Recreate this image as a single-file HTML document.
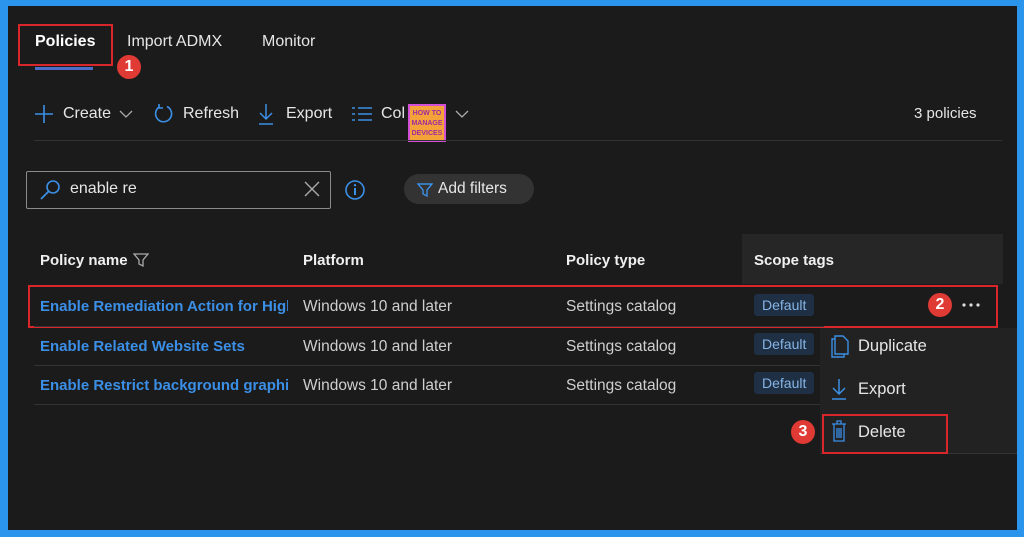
<!DOCTYPE html>
<html><head><meta charset="utf-8"><style>
*{margin:0;padding:0;box-sizing:border-box}
body{width:1024px;height:537px;background:#2b95ee;font-family:"Liberation Sans",sans-serif;overflow:hidden;position:relative}
#main{position:absolute;left:8px;top:6px;width:1009px;height:524px;background:#1b1b1b}
.a{position:absolute;white-space:nowrap}
.t{color:#e6e6e6;font-size:16px}
.h{color:#f0f0f0;font-size:15px;font-weight:bold}
.lnk{color:#3b8fe6;font-size:15px;font-weight:bold;overflow:hidden}
.g{color:#cfcfcf;font-size:15.5px}
.badge{position:absolute;background:#1f3044;color:#86b4e6;font-size:14px;padding:3px 8px;border-radius:3px}
.red{position:absolute;border:2.5px solid #d9262b}
.num{position:absolute;width:24px;height:24px;border-radius:50%;background:#e03a35;color:#fff;font-size:16px;font-weight:bold;text-align:center;line-height:24px}
.sep{position:absolute;height:1px;background:#333}
</style></head><body>
<div id="main">
<div class="a t" style="left:27px;top:27px;font-weight:bold;color:#fff">Policies</div>
<div style="position:absolute;left:27px;top:61px;width:58px;height:3px;background:#4b6cc7"></div>
<div class="a t" style="left:119px;top:27px">Import ADMX</div>
<div class="a t" style="left:254px;top:27px">Monitor</div>
<div class="red" style="left:10px;top:18px;width:95px;height:42px"></div>
<div class="num" style="left:109px;top:49px">1</div>

<svg class="a" style="left:26px;top:98px" width="20" height="20"><path d="M10 1v18M1 10h18" stroke="#3b8fe6" stroke-width="1.6"/></svg>
<div class="a t" style="left:55px;top:99px">Create</div>
<svg class="a" style="left:111px;top:103px" width="14" height="10"><path d="M1 2l6 6 6-6" stroke="#aaa" fill="none" stroke-width="1.3"/></svg>
<svg class="a" style="left:145px;top:97px" width="22" height="22"><path d="M14 3.5A8 8 0 1 1 7 3.6M6 1v4h4" stroke="#3b8fe6" fill="none" stroke-width="1.6"/></svg>
<div class="a t" style="left:175px;top:99px">Refresh</div>
<svg class="a" style="left:250px;top:97px" width="16" height="22"><path d="M8 1v15M2 10l6 6 6-6M1 21h14" stroke="#3b8fe6" fill="none" stroke-width="1.5"/></svg>
<div class="a t" style="left:278px;top:99px">Export</div>
<svg class="a" style="left:343px;top:100px" width="22" height="16"><path d="M1 2h3M1 8h3M1 14h3M7 2h14M7 8h14M7 14h14" stroke="#3b8fe6" stroke-width="1.5"/></svg>
<div class="a t" style="left:373px;top:99px">Col</div>
<div class="a" style="left:400px;top:98px;width:38px;height:38px;background:#f4a23a;border:2px solid #d24fd6;font-size:7px;color:#a02b9e;text-align:center;line-height:10px;font-weight:bold;padding-top:3px;overflow:hidden">HOW TO<br>MANAGE<br>DEVICES</div>
<svg class="a" style="left:447px;top:103px" width="14" height="10"><path d="M1 2l6 6 6-6" stroke="#aaa" fill="none" stroke-width="1.3"/></svg>
<div class="a t" style="left:906px;top:99px;font-size:15px">3 policies</div>
<div class="sep" style="left:26px;top:134px;width:968px"></div>

<div class="a" style="left:18px;top:165px;width:305px;height:38px;border:1.5px solid #8a8a8a;border-radius:2px"></div>
<svg class="a" style="left:31px;top:173px" width="22" height="22"><circle cx="14" cy="8" r="6" stroke="#3b8fe6" fill="none" stroke-width="1.6"/><path d="M10 12L2 20" stroke="#3b8fe6" stroke-width="1.8"/></svg>
<div class="a t" style="left:62px;top:174px">enable re</div>
<svg class="a" style="left:296px;top:175px" width="16" height="16"><path d="M1 1l14 14M15 1L1 15" stroke="#aaa" stroke-width="1.4"/></svg>
<svg class="a" style="left:336px;top:173px" width="22" height="22"><circle cx="11" cy="11" r="9" stroke="#3b8fe6" fill="none" stroke-width="1.6"/><path d="M11 9v7" stroke="#3b8fe6" stroke-width="2"/><circle cx="11" cy="6.2" r="1.2" fill="#3b8fe6"/></svg>
<div class="a" style="left:396px;top:168px;width:130px;height:30px;background:#333;border-radius:15px"></div>
<svg class="a" style="left:409px;top:176px" width="16" height="16"><path d="M1 2h14l-5 6v6l-4-2V8z" stroke="#3b8fe6" fill="none" stroke-width="1.4"/></svg>
<div class="a t" style="left:430px;top:174px;font-size:15.5px">Add filters</div>

<div class="a" style="left:734px;top:228px;width:261px;height:50px;background:#262626"></div>
<div class="a h" style="left:32px;top:246px">Policy name</div>
<svg class="a" style="left:125px;top:246px" width="16" height="16"><path d="M1 2h14l-5 6v6l-4-2V8z" stroke="#aaa" fill="none" stroke-width="1.3"/></svg>
<div class="a h" style="left:295px;top:246px">Platform</div>
<div class="a h" style="left:558px;top:246px">Policy type</div>
<div class="a h" style="left:746px;top:246px">Scope tags</div>

<div class="a lnk" style="left:32px;top:292px;width:248px">Enable Remediation Action for High</div>
<div class="a g" style="left:295px;top:292px">Windows 10 and later</div>
<div class="a g" style="left:558px;top:292px">Settings catalog</div>
<div class="badge" style="left:746px;top:288px">Default</div>
<svg class="a" style="left:953px;top:296px" width="20" height="6"><circle cx="3" cy="3" r="1.6" fill="#ddd"/><circle cx="10" cy="3" r="1.6" fill="#ddd"/><circle cx="17" cy="3" r="1.6" fill="#ddd"/></svg>
<div class="red" style="left:20px;top:279px;width:970px;height:43px"></div>
<div class="num" style="left:920px;top:287px">2</div>
<div class="sep" style="left:26px;top:320px;width:790px"></div>

<div class="a lnk" style="left:32px;top:332px">Enable Related Website Sets</div>
<div class="a g" style="left:295px;top:332px">Windows 10 and later</div>
<div class="a g" style="left:558px;top:332px">Settings catalog</div>
<div class="badge" style="left:746px;top:327px">Default</div>
<div class="sep" style="left:26px;top:359px;width:790px"></div>
<div class="a lnk" style="left:32px;top:371px;width:248px">Enable Restrict background graphic</div>
<div class="a g" style="left:295px;top:371px">Windows 10 and later</div>
<div class="a g" style="left:558px;top:371px">Settings catalog</div>
<div class="badge" style="left:746px;top:366px">Default</div>
<div class="sep" style="left:26px;top:398px;width:790px"></div>

<div class="a" style="left:812px;top:322px;width:197px;height:126px;background:#222;border-bottom:1px solid #333"></div>
<svg class="a" style="left:822px;top:329px" width="20" height="24"><path d="M5 4H2v18h12v-3M5 1h8l5 5v13H5z" stroke="#3b8fe6" fill="none" stroke-width="1.4"/></svg>
<div class="a t" style="left:850px;top:331px;font-size:16.5px">Duplicate</div>
<svg class="a" style="left:823px;top:372px" width="16" height="22"><path d="M8 1v15M2 10l6 6 6-6M1 21h14" stroke="#3b8fe6" fill="none" stroke-width="1.5"/></svg>
<div class="a t" style="left:850px;top:374px;font-size:16.5px">Export</div>
<svg class="a" style="left:823px;top:414px" width="16" height="22"><path d="M1 4h14M6 4V1h4v3M3 4v17h10V4M6 8v10M8 8v10M10 8v10" stroke="#3b8fe6" fill="none" stroke-width="1.3"/></svg>
<div class="a t" style="left:850px;top:417px;font-size:16.5px">Delete</div>
<div class="red" style="left:814px;top:408px;width:126px;height:40px"></div>
<div class="num" style="left:783px;top:414px">3</div>
</div>
</body></html>
